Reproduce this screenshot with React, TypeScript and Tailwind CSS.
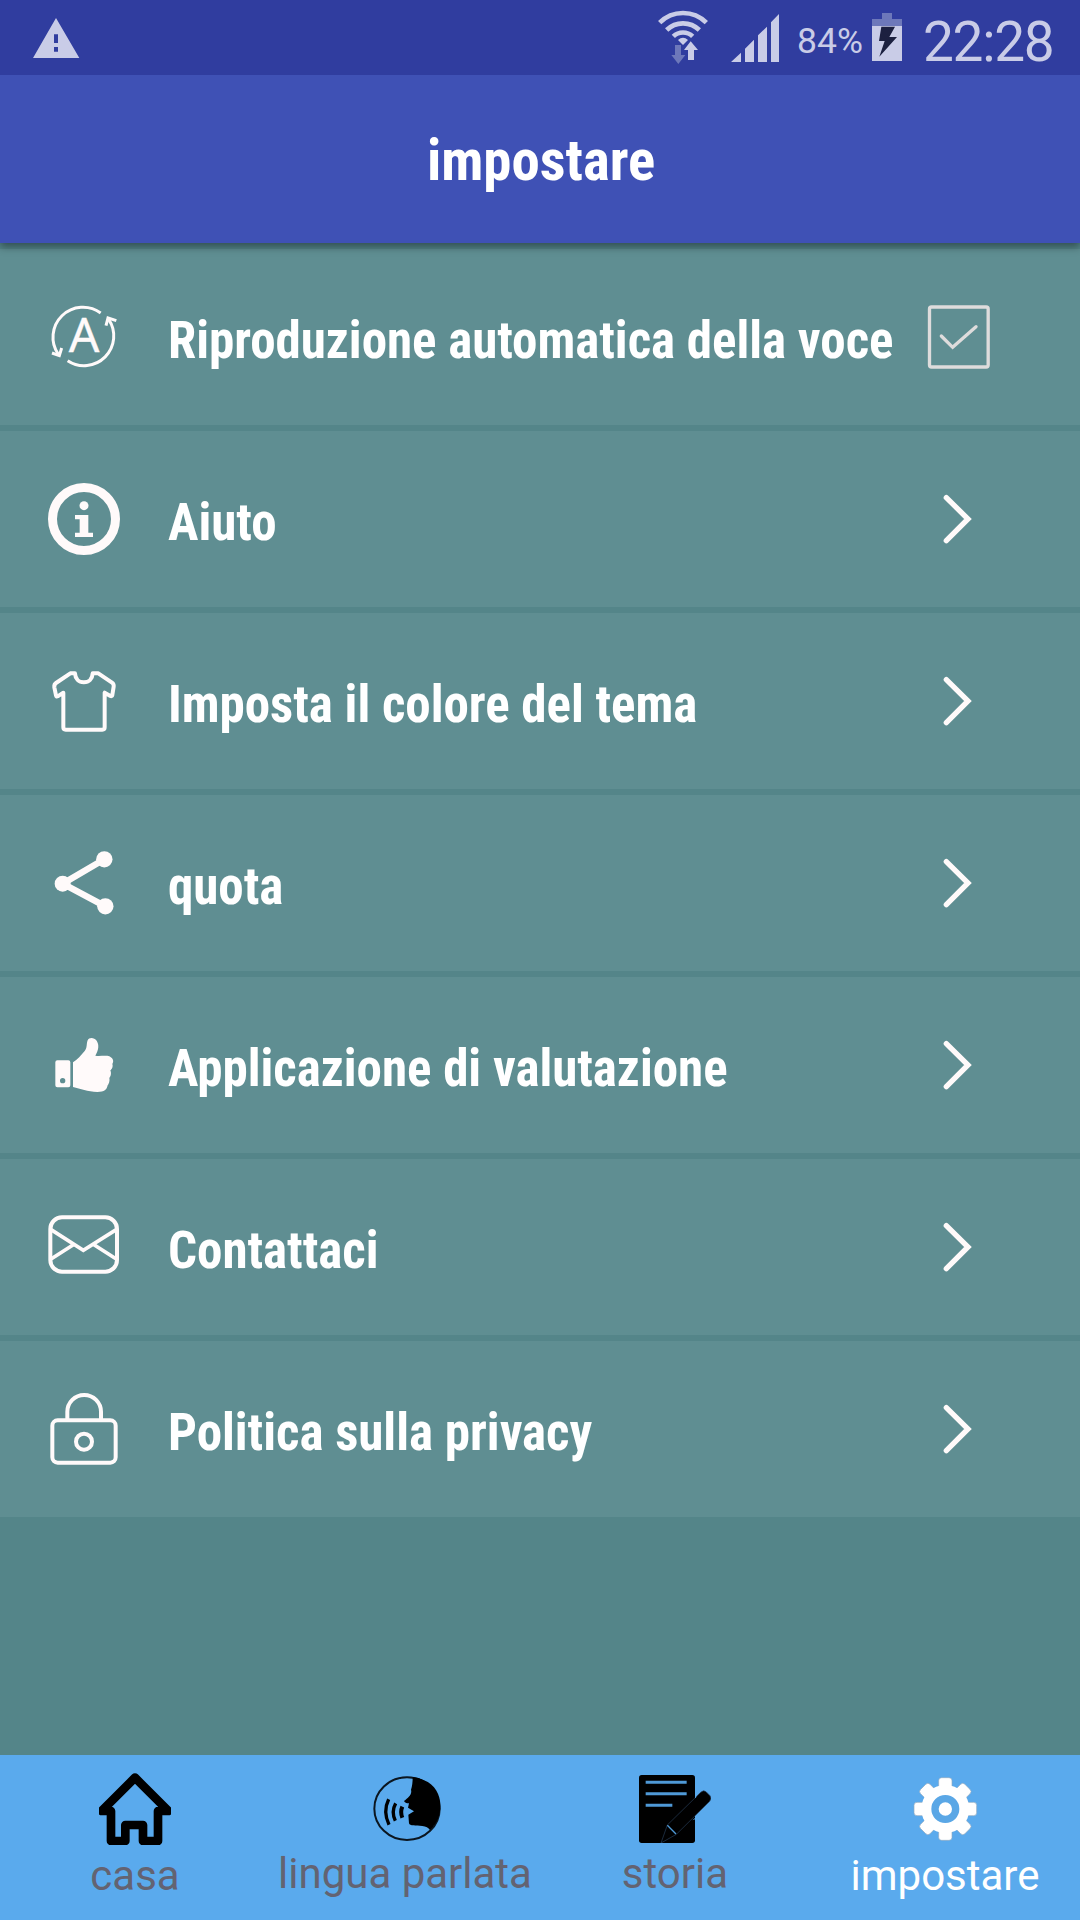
import type { ReactNode } from "react";

// ─── Status bar ──────────────────────────────────────────────────

function StatusBar() {
  return (
    <div className="relative z-10 flex h-[75px] items-center bg-[#303d9f] text-[#c9cce7]">
      <svg className="ml-8 h-[75px] w-12" viewBox="96 0 144 225" fill="currentColor" fillRule="evenodd">
        <path d="M168 54L99 174H238ZM162 103H174V129H162ZM162 141H174V155H162Z" />
      </svg>

      <svg className="ml-auto h-[75px] w-[54px]" viewBox="48 0 162 225" fill="none">
        <g stroke="currentColor" strokeWidth="14">
          <path d="M59 68A99 99 0 0 1 199 68" />
          <path d="M80 90A70 70 0 0 1 178 90" />
          <path d="M100 109A42 42 0 0 1 158 109" />
        </g>
        <path d="M114 120Q129 107 144 120L129 135Z" fill="currentColor" />
        <path d="M105 135H123V165H136L115 192L94 165H105Z" fill="#6d78ba" />
        <path d="M152 124L174 150H162V180H144V150H132Z" fill="currentColor" />
      </svg>

      <svg className="ml-5 h-[75px] w-[50px]" viewBox="270 0 150 225" fill="currentColor">
        <path d="M273 186L303 158V186ZM315 186V146L342 119V186ZM354 186V106L381 80V186ZM393 186V67L417 42V186Z" />
      </svg>

      <span className="ml-[17px] w-[73px] pt-[9px] text-[35.5px] leading-none whitespace-nowrap">84%</span>

      <svg className="h-[75px] w-[34px]" viewBox="690 0 102 225">
        <path d="M726 39H756V57H786V78H696V57H726Z" fill="#6d78ba" />
        <path d="M696 78H786V183H696Z" fill="currentColor" />
        <path d="M724 80H765L748 111H771L718 170L734 123H717Z" fill="#1c2040" />
      </svg>

      <span className="ml-[19px] w-[157px] pt-2.5 text-[55px] leading-none tracking-[-1.3px] whitespace-nowrap">
        22:28
      </span>
    </div>
  );
}

// ─── Settings list ───────────────────────────────────────────────

function RowIcon({ children }: { children: ReactNode }) {
  return (
    <svg
      className="ml-11 size-20 shrink-0 text-[#fffafa]"
      viewBox="0 0 240 240"
      fill="none"
      stroke="currentColor"
      strokeWidth="12"
    >
      {children}
    </svg>
  );
}

const autoPlayIcon = (
  <>
    <g strokeWidth="9">
      <path d="M170 48A90 90 0 0 0 43 172" />
      <path d="M71 191A89 89 0 0 0 194 67" />
      <path d="M24 168L46 176L53 153M186 86L192 63L217 71" />
    </g>
    <text
      x="120"
      y="166"
      textAnchor="middle"
      fontSize="144"
      fill="currentColor"
      strokeWidth="1"
      className="font-['Noto_Sans',sans-serif]"
    >
      A
    </text>
  </>
);

const infoIcon = (
  <>
    <circle cx="120" cy="120" r="94.5" strokeWidth="27" />
    <g fill="currentColor" stroke="none">
      <circle cx="120" cy="80" r="13.5" />
      <path d="M93 108H133V161H147V174H93V161H107V121H93Z" />
    </g>
  </>
);

const shirtIcon = (
  <path
    strokeLinejoin="round"
    d="M79 37H93C94 54 104 64 119.500 64S145 54 146 37H163L204 65Q210 69 209 77L205 102Q204 107 199 105L182 95V199Q182 206 175 206H65Q58 206 58 199V95L41 106Q37 108 36 103L31 79Q30 70 36 66Z"
  />
);

const shareIcon = (
  <>
    <path d="M181 49L56 122L184 190" strokeWidth="19" />
    <g fill="currentColor" stroke="none">
      <circle cx="56" cy="122" r="24" />
      <circle cx="181" cy="49" r="24.500" />
      <circle cx="184" cy="190" r="24.500" />
    </g>
  </>
);

const thumbIcon = (
  <g fill="currentColor" stroke="none" fillRule="evenodd">
    <path d="M40 106H73Q79 106 79 112V181Q79 187 73 187H40Q34 187 34 181V112Q34 106 40 106ZM56 159A8 8 0 1 0 56 175A8 8 0 1 0 56 159Z" />
    <path d="M87 112C100 104 112 90 122 78C130 70 127 55 131 46C135 37 150 37 158 47C166 60 164 74 154 92C165 95 185 90 196 94C206 99 211 108 205 117C208 126 203 133 199 136C203 145 200 155 196 159C198 168 194 178 191 181C188 195 182 200 160 201C130 200 110 192 87 186Z" />
  </g>
);

const mailIcon = (
  <>
    <rect x="19" y="31" width="200" height="163" rx="35" />
    <path d="M20 67L118 130L218 67M88 113L20 157M150 113L218 157" strokeWidth="11" />
  </>
);

const lockIcon = (
  <>
    <rect x="25" y="94" width="190" height="127" rx="16" />
    <path d="M70 94V68.500A50.500 50.500 0 0 1 171 68.500V94" />
    <circle cx="120" cy="158" r="24" />
  </>
);

const rows = [
  { label: "Riproduzione automatica della voce", icon: autoPlayIcon, checkbox: true },
  { label: "Aiuto", icon: infoIcon },
  { label: "Imposta il colore del tema", icon: shirtIcon },
  { label: "quota", icon: shareIcon },
  { label: "Applicazione di valutazione", icon: thumbIcon },
  { label: "Contattaci", icon: mailIcon },
  { label: "Politica sulla privacy", icon: lockIcon },
];

function Checkbox() {
  return (
    <svg className="mr-20 size-20 shrink-0" viewBox="0 0 240 240" fill="none" stroke="#dedcdc" strokeWidth="10">
      <rect x="28.500" y="30" width="176" height="180" rx="6" />
      <path d="M64 117L98 151L168 89" strokeLinecap="round" />
    </svg>
  );
}

function Chevron() {
  return (
    <svg className="mr-20 size-20 shrink-0" viewBox="0 0 240 240" fill="none" stroke="#fffafa" strokeWidth="16">
      <path d="M79 56L144 120L79 185" strokeLinecap="round" />
    </svg>
  );
}

// ─── Bottom navigation ───────────────────────────────────────────

const homeIcon = (
  <path
    d="M108 14L8 114H36V204H79V156H132V204H177V114H208Z"
    fill="none"
    stroke="#000"
    strokeWidth="26"
    strokeLinejoin="round"
  />
);

const speakIcon = (
  <>
    <ellipse cx="114" cy="113" rx="98" ry="94" fill="none" stroke="#0b1620" strokeWidth="6" />
    <path d="M131 18C131 30 130 45 126 56C130 70 118 80 105 90Q108 97 120 97L117 110L135 121L118 131L120 157C122 166 140 163 160 165Q176 167 183 177C230 135 224 50 165 28Q150 20 131 18Z" />
    <g fill="none" stroke="#000" strokeWidth="10">
      <path d="M100 107Q93 123 100 140" strokeWidth="12" />
      <path d="M80 97Q66 122 79 149" />
      <path d="M59 85Q41 122 60 161" />
    </g>
  </>
);

const historyIcon = (
  <>
    <rect y="12" width="168" height="204" rx="8" />
    <path d="M20 34H143M20 68H143M20 103H100" stroke="#4f99d6" strokeWidth="9" />
    <path
      d="M85 162L185 64Q193 56 201 62L213 74Q219 82 212 91L112 190L66 216Z"
      stroke="#28405a"
      strokeWidth="2"
    />
    <path d="M168 76V82L173 77ZM168 141L160 148L168 145Z" fill="#5aaaed" />
    <path d="M85 163L111 189" stroke="#4f99d6" strokeWidth="4" />
  </>
);

const gearIcon = (
  <g fill="#fff">
    <g stroke="#8fa9c0" strokeWidth="2">
      {[0, 45, 90, 135].map((angle) => (
        <rect key={angle} x="89" y="14" width="40" height="188" rx="9" transform={`rotate(${angle} 109 108)`} />
      ))}
    </g>
    <circle cx="109" cy="108" r="72" />
    <circle cx="109" cy="108" r="31" fill="none" stroke="#5aa7e6" strokeWidth="22" />
  </g>
);

const tabs = [
  { label: "casa", icon: homeIcon, pad: "pt-[18px]" },
  { label: "lingua parlata", icon: speakIcon, pad: "pt-4" },
  { label: "storia", icon: historyIcon, pad: "pt-4" },
  { label: "impostare", icon: gearIcon, pad: "pt-[18px]", active: true },
];

export default function App() {
  return (
    <div className="flex h-[1920px] w-[1080px] flex-col overflow-hidden bg-[#548589] font-['Roboto',sans-serif]">
      <StatusBar />
      <header className="relative flex h-[168px] items-center justify-center bg-[#3f51b5] shadow-[0_4px_8px_rgba(0,0,0,0.4)]">
        <h1 className="pt-1 pl-0.5 text-[56.8px] leading-none font-bold text-white [font-family:'Roboto_Condensed',Roboto,sans-serif] [font-stretch:75%]">
          impostare
        </h1>
      </header>

      <ul className="flex flex-col gap-1.5 pt-1.5">
        {rows.map((row) => (
          <li key={row.label} className="flex h-44 items-center bg-[#5f8e92]">
            <RowIcon>{row.icon}</RowIcon>
            <span className="ml-11 flex-1 pt-1.5 text-[51px] leading-none font-bold tracking-[-0.03px] whitespace-nowrap text-white [font-family:'Roboto_Condensed',Roboto,sans-serif] [font-stretch:75%]">
              {row.label}
            </span>
            {row.checkbox ? <Checkbox /> : <Chevron />}
          </li>
        ))}
      </ul>

      <nav className="mt-auto grid h-[165px] grid-cols-4 bg-[#5aaaed]">
        {tabs.map((tab) => (
          <div key={tab.label} className={`flex flex-col items-center ${tab.pad}`}>
            <svg className="size-[72px]" viewBox="0 0 216 216">
              {tab.icon}
            </svg>
            <span
              className={`mt-[7px] text-[42px] leading-[48px] whitespace-nowrap ${tab.active ? "text-white" : "text-[#636372]"}`}
            >
              {tab.label}
            </span>
          </div>
        ))}
      </nav>
    </div>
  );
}
